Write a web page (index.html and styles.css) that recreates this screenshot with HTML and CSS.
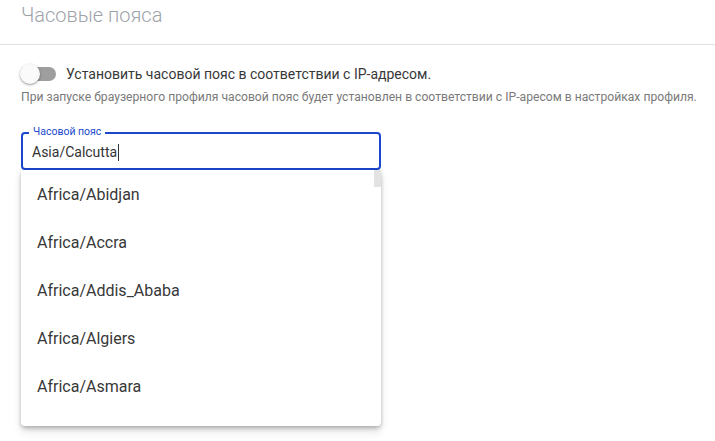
FILE: index.html
```html
<!DOCTYPE html>
<html lang="ru">
<head>
<meta charset="utf-8">
<link rel="stylesheet" href="styles.css">
</head>
<body>
<div class="header"><h1 class="title">Часовые пояса</h1></div>
<div class="content">
  <div class="switch-row">
    <span class="switch"><span class="track"></span><span class="thumb"></span></span>
    <span class="switch-label">Установить часовой пояс в соответствии с IP-адресом.</span>
  </div>
  <p class="hint">При запуске браузерного профиля часовой пояс будет установлен в соответствии с IP-аресом в настройках профиля.</p>
  <div class="field">
    <span class="field-label">Часовой пояс</span>
    <span class="field-value">Asia/Calcutta<span class="caret"></span></span>
  </div>
  <div class="menu">
    <div class="scroll-thumb"></div>
    <div class="item">Africa/Abidjan</div>
    <div class="item">Africa/Accra</div>
    <div class="item">Africa/Addis_Ababa</div>
    <div class="item">Africa/Algiers</div>
    <div class="item">Africa/Asmara</div>
  </div>
</div>
</body>
</html>
```
FILE: styles.css
```css
html, body { margin: 0; padding: 0; background: #fff; }
body { font-family: Roboto, "Noto Sans", sans-serif; color: #333; width: 715px; height: 441px; overflow: hidden; }
.header { height: 45px; border-bottom: 1px solid #e0e0e0; padding-left: 21px; box-sizing: border-box; }
.title { margin: 0; padding-top: 2px; font-size: 20px; font-weight: 300; color: #9ea3aa; line-height: 26px; }
.content { padding-left: 21px; }
.switch-row { display: flex; align-items: center; height: 20px; margin-top: 19px; }
.switch { position: relative; width: 36px; height: 20px; margin-left: -1px; }
.track { position: absolute; left: 3px; top: 3px; width: 33px; height: 14px; border-radius: 7px; background: #9e9e9e; }
.thumb { position: absolute; left: 0; top: 0; width: 20px; height: 20px; border-radius: 50%; background: #fafafa; box-shadow: 0 1px 3px rgba(0,0,0,.3), 0 1px 1px rgba(0,0,0,.14); }
.switch-label { margin-left: 10px; font-size: 14px; color: #383838; }
.hint { margin: 6px 0 0; font-size: 12.15px; color: #7a7a7a; line-height: 15px; }
.field { position: relative; margin-top: 27px; width: 360px; height: 38px; box-sizing: border-box; border: 2px solid #1a47cc; border-radius: 4px; display: flex; align-items: center; padding-left: 9px; }
.field-label { position: absolute; left: 6px; top: -9px; background: #fff; padding: 0 4px; font-size: 10.5px; line-height: 14px; color: #1a47cc; }
.field-value { font-size: 14px; color: #333; display: flex; align-items: center; padding-top: 2px; }
.caret { display: inline-block; width: 1px; height: 17px; background: #333; margin-left: 1px; }
.menu { position: relative; width: 360px; height: 256px; background: #fff; border-radius: 0 0 4px 4px; box-shadow: 0 3px 5px -1px rgba(0,0,0,.2), 0 6px 10px 0 rgba(0,0,0,.1), 0 1px 4px 0 rgba(0,0,0,.12); overflow: hidden; }
.scroll-thumb { position: absolute; right: 0; top: 0; width: 7px; height: 17px; background: #e3e3e3; }
.item { height: 48px; display: flex; align-items: center; padding-left: 16px; font-size: 16px; color: #383838; }
```
